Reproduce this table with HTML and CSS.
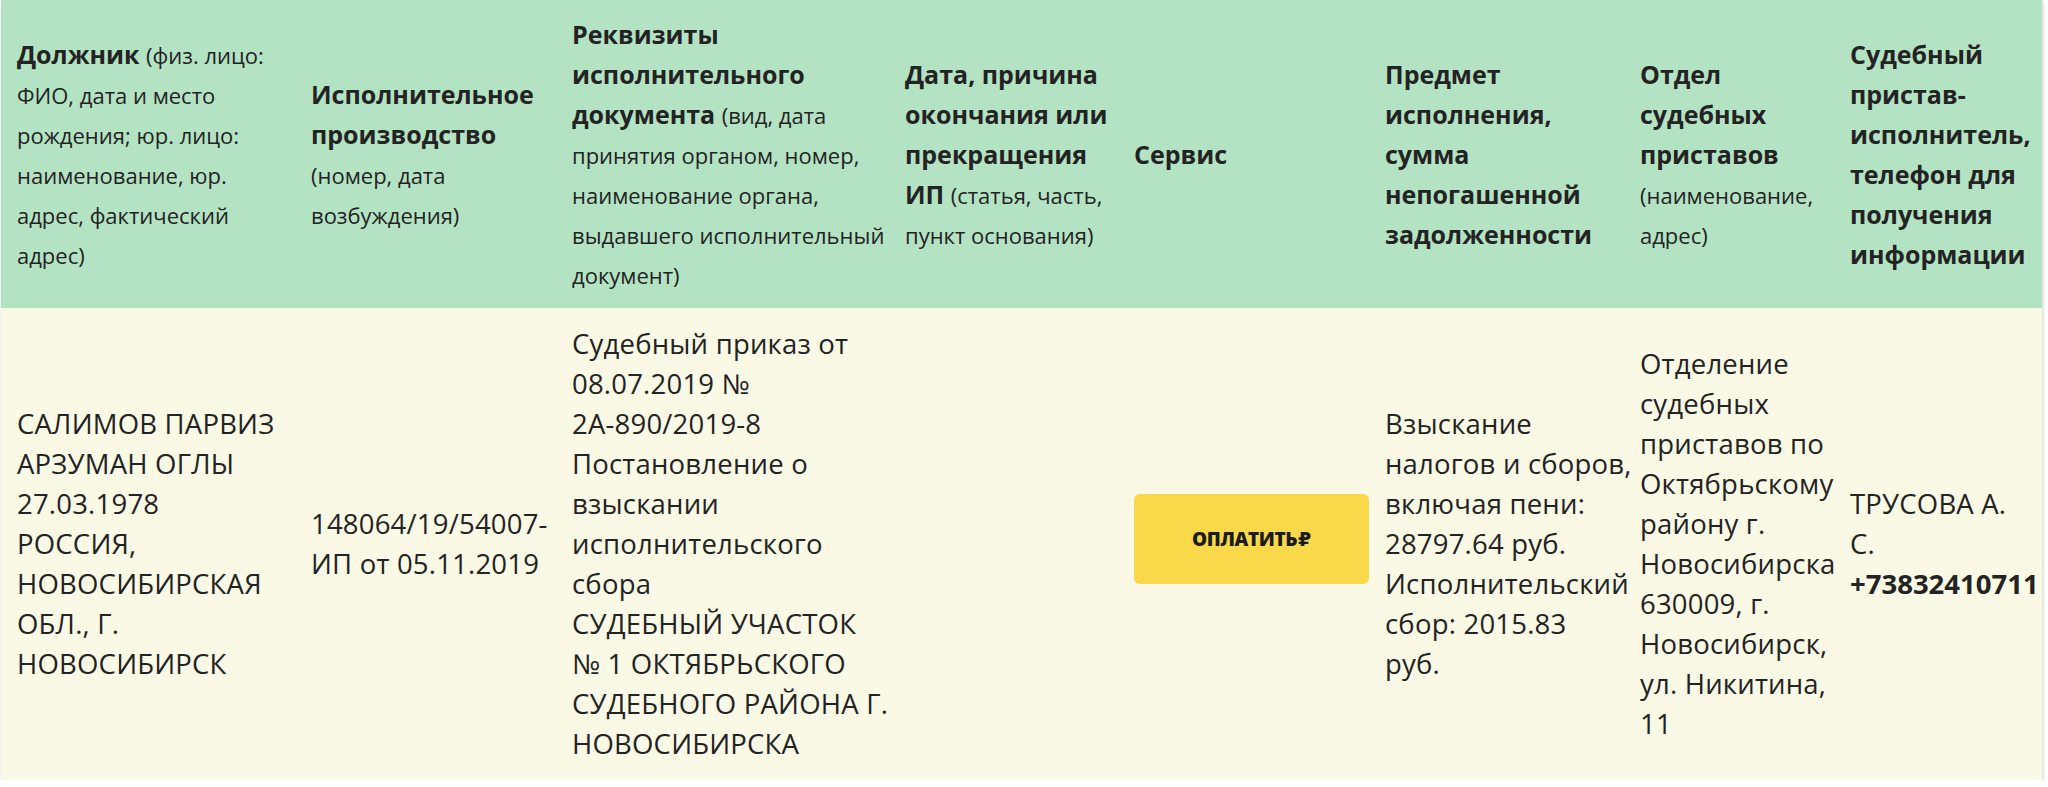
FILE: index.html
```html
<!DOCTYPE html>
<html lang="ru">
<head>
<meta charset="utf-8">
<title>Исполнительные производства</title>
<link rel="stylesheet" href="styles.css">
</head>
<body>
<div class="wrap">
<table class="ip-table">
  <colgroup>
    <col class="c1"><col class="c2"><col class="c3"><col class="c4"><col class="c5"><col class="c6"><col class="c7"><col class="c8">
  </colgroup>
  <thead>
    <tr>
      <th><b>Должник</b> <span class="note">(физ. лицо:<br>ФИО, дата и место<br>рождения; юр. лицо:<br>наименование, юр.<br>адрес, фактический<br>адрес)</span></th>
      <th><b>Исполнительное<br>производство</b><br><span class="note">(номер, дата<br>возбуждения)</span></th>
      <th><b>Реквизиты<br>исполнительного<br>документа</b> <span class="note">(вид, дата<br>принятия органом, номер,<br>наименование органа,<br>выдавшего исполнительный<br>документ)</span></th>
      <th><b>Дата, причина<br>окончания или<br>прекращения<br>ИП</b> <span class="note">(статья, часть,<br>пункт основания)</span></th>
      <th><b>Сервис</b></th>
      <th><b>Предмет<br>исполнения,<br>сумма<br>непогашенной<br>задолженности</b></th>
      <th><b>Отдел<br>судебных<br>приставов</b><br><span class="note">(наименование,<br>адрес)</span></th>
      <th><b>Судебный<br>пристав-<br>исполнитель,<br>телефон для<br>получения<br>информации</b></th>
    </tr>
  </thead>
  <tbody>
    <tr>
      <td>САЛИМОВ ПАРВИЗ<br>АРЗУМАН ОГЛЫ<br>27.03.1978<br>РОССИЯ,<br>НОВОСИБИРСКАЯ<br>ОБЛ., Г.<br>НОВОСИБИРСК</td>
      <td>148064/19/54007-<br>ИП от 05.11.2019</td>
      <td>Судебный приказ от<br>08.07.2019 №<br>2А-890/2019-8<br>Постановление о<br>взыскании<br>исполнительского<br>сбора<br>СУДЕБНЫЙ УЧАСТОК<br>№ 1 ОКТЯБРЬСКОГО<br>СУДЕБНОГО РАЙОНА Г.<br>НОВОСИБИРСКА</td>
      <td></td>
      <td><button class="pay" type="button">ОПЛАТИТЬ<span class="rub">₽</span></button></td>
      <td>Взыскание<br>налогов и сборов,<br>включая пени:<br>28797.64 руб.<br>Исполнительский<br>сбор: 2015.83<br>руб.</td>
      <td>Отделение<br>судебных<br>приставов по<br>Октябрьскому<br>району г.<br>Новосибирска<br>630009, г.<br>Новосибирск,<br>ул. Никитина,<br>11</td>
      <td>ТРУСОВА А.<br>С.<br><b>+73832410711</b></td>
    </tr>
  </tbody>
</table>
</div>
</body>
</html>
```
FILE: styles.css
```css
html, body {
  margin: 0;
  padding: 0;
  background: #ffffff;
}
body {
  font-family: "Open Sans", "Noto Sans", sans-serif;
  color: #232323;
}
.wrap {
  padding: 0 0 0 1px;
}
.ip-table {
  width: 2041px;
  table-layout: fixed;
  border-collapse: collapse;
  box-shadow: 0 2px 4px rgba(0, 0, 0, 0.12), 2px 0 3px rgba(0, 0, 0, 0.08);
}
.c1 { width: 294px; }
.c2 { width: 261px; }
.c3 { width: 333px; }
.c4 { width: 229px; }
.c5 { width: 251px; }
.c6 { width: 255px; }
.c7 { width: 210px; }
.c8 { width: 208px; }

.ip-table th,
.ip-table td {
  padding: 14px 0 14px 16px;
  vertical-align: middle;
  text-align: left;
  white-space: nowrap;
  line-height: 40px;
}
.ip-table thead th {
  background: #b3e3c3;
  font-weight: 400;
  font-size: 25px;
  height: 280px;
}
.ip-table thead b {
  font-weight: 700;
  font-stretch: 94%;
  line-height: 1;
}
.ip-table .note {
  font-size: 22px;
  line-height: 1;
}
.ip-table tbody td {
  background: #f9f9e5;
  font-size: 27.5px;
  letter-spacing: 0.2px;
  padding-top: 16px;
  padding-bottom: 16px;
}
.ip-table tbody b {
  font-weight: 700;
  font-stretch: 90%;
  letter-spacing: 0;
}
.pay {
  display: block;
  width: 235px;
  height: 90px;
  border: none;
  border-radius: 6px;
  background: #f9d949;
  color: #1c1c1c;
  font-family: "Open Sans", "DejaVu Sans", sans-serif;
  font-stretch: 96%;
  font-weight: 800;
  font-size: 19px;
  letter-spacing: -0.4px;
  cursor: pointer;
  margin-top: -10px;
}
.pay .rub {
  margin-left: 1px;
}
```
